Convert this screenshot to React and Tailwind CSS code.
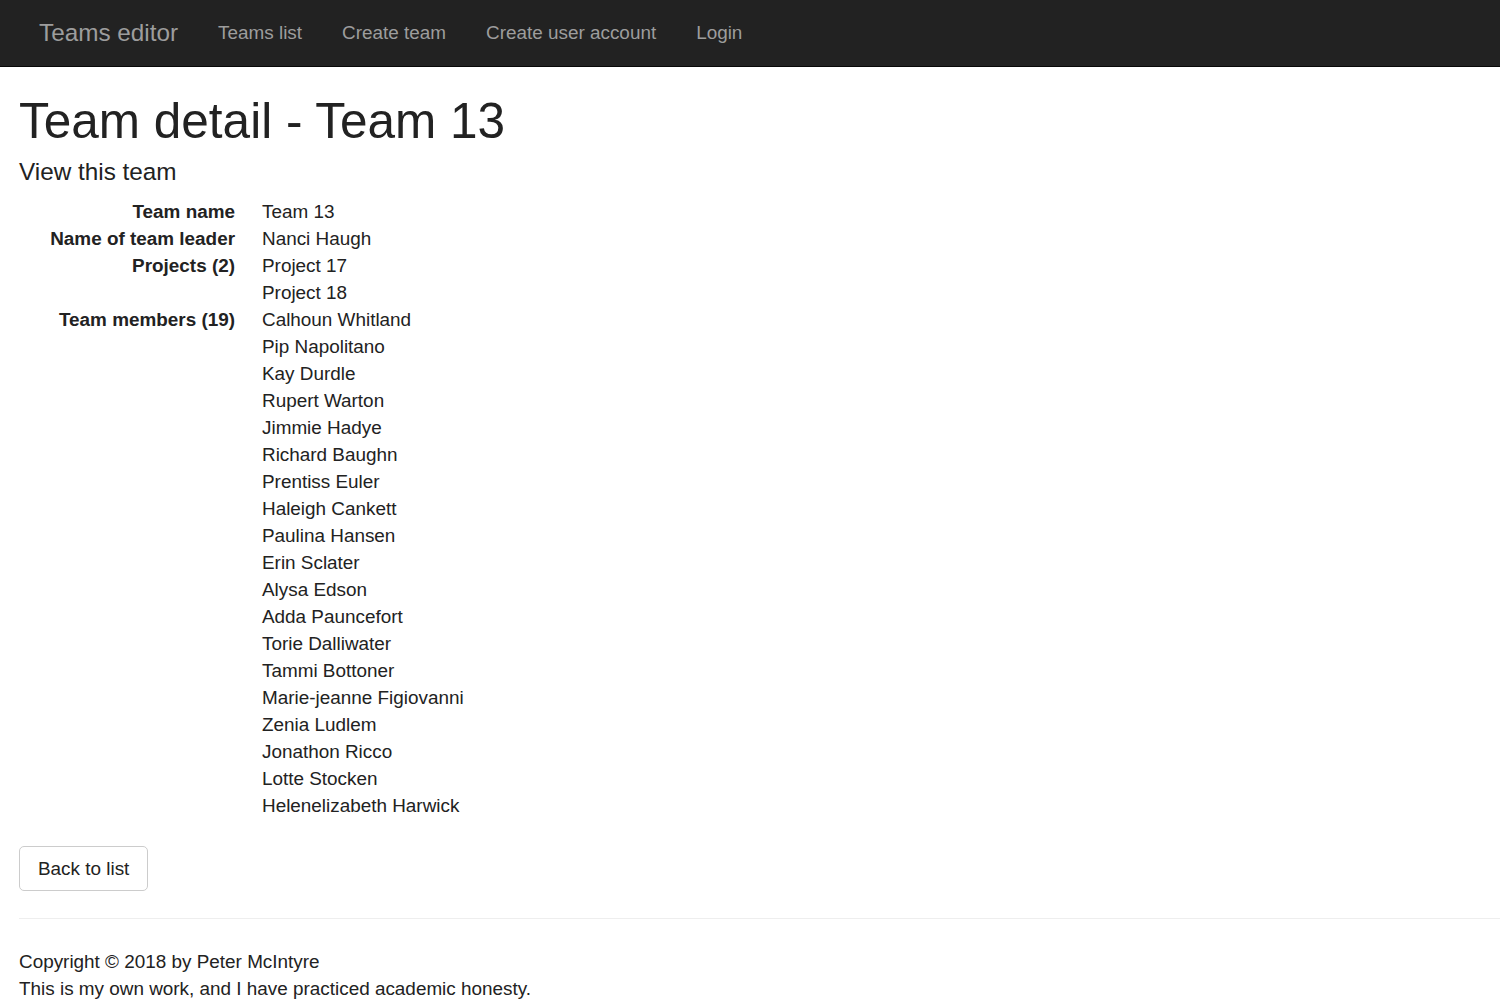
const members = [
  "Calhoun Whitland",
  "Pip Napolitano",
  "Kay Durdle",
  "Rupert Warton",
  "Jimmie Hadye",
  "Richard Baughn",
  "Prentiss Euler",
  "Haleigh Cankett",
  "Paulina Hansen",
  "Erin Sclater",
  "Alysa Edson",
  "Adda Pauncefort",
  "Torie Dalliwater",
  "Tammi Bottoner",
  "Marie-jeanne Figiovanni",
  "Zenia Ludlem",
  "Jonathon Ricco",
  "Lotte Stocken",
  "Helenelizabeth Harwick",
]

const projects = ["Project 17", "Project 18"]

const Row = ({ label, values }) => (
  <div className="flex">
    <dt className="w-[216px] shrink-0 text-right font-bold">{label}</dt>
    <dd className="ml-[27px] flex flex-col">
      {values.map((v) => (
        <span key={v}>{v}</span>
      ))}
    </dd>
  </div>
)

const App = () => {
  return (
    <div className="min-h-screen bg-white text-[#333] text-[18.9px] leading-[27px] font-['Helvetica_Neue','Liberation_Sans',Arial,sans-serif]">
      <nav className="h-[67px] bg-[#222] border-b border-[#080808] flex items-center px-[19px] pb-[2px]">
        <a className="px-[20px] text-[24.3px] text-[#9d9d9d]">Teams editor</a>
        <a className="px-[20px] text-[#9d9d9d]">Teams list</a>
        <a className="px-[20px] text-[#9d9d9d]">Create team</a>
        <a className="px-[20px] text-[#9d9d9d]">Create user account</a>
        <a className="px-[20px] text-[#9d9d9d]">Login</a>
      </nav>

      <div className="pl-[19px] pt-[27px]">
        <h1 className="text-[49.5px] leading-[1.1] font-medium text-[#222]">Team detail - Team 13</h1>
        <h4 className="mt-[11px] text-[24.3px] leading-[1.1] font-medium text-[#222]">View this team</h4>

        <dl className="mt-[12px] mb-[27px] text-[#222]">
          <Row label="Team name" values={["Team 13"]} />
          <Row label="Name of team leader" values={["Nanci Haugh"]} />
          <Row label="Projects (2)" values={projects} />
          <Row label="Team members (19)" values={members} />
        </dl>

        <button className="h-[45px] px-[18px] border border-[#ccc] rounded-[5px] bg-white text-[#222]">
          Back to list
        </button>

        <hr className="mt-[27px] mb-[29px] border-t border-[#eee]" />

        <footer className="text-[#222]">
          <p>Copyright © 2018 by Peter McIntyre</p>
          <p>This is my own work, and I have practiced academic honesty.</p>
        </footer>
      </div>
    </div>
  )
}

export default App
